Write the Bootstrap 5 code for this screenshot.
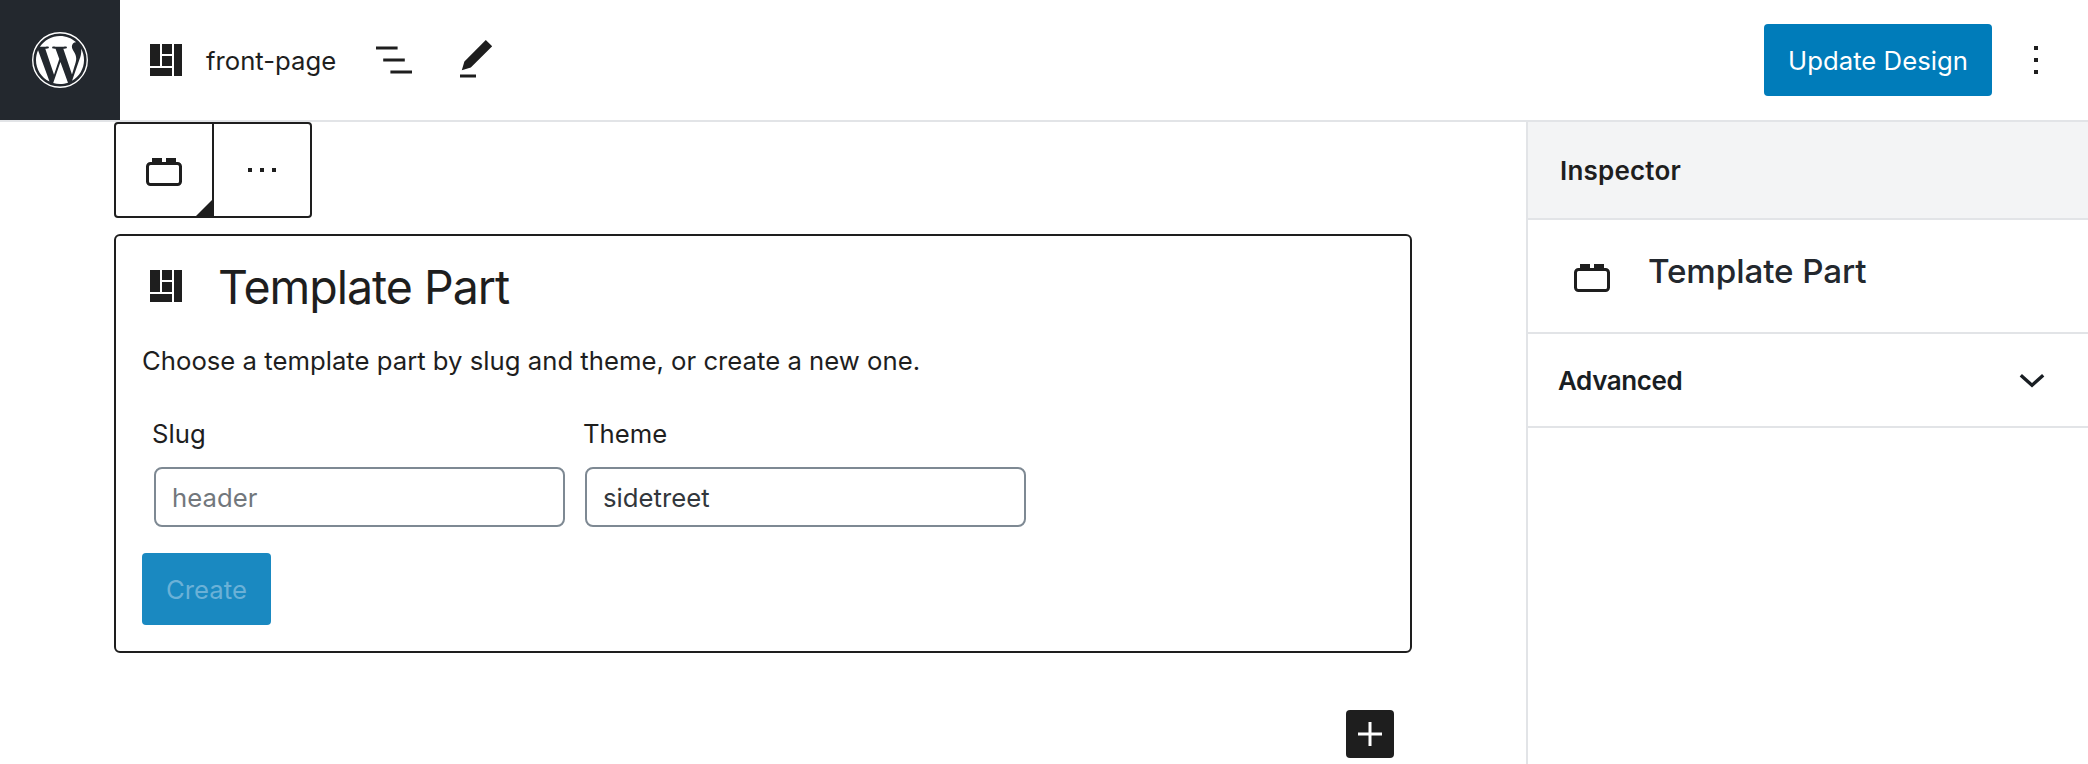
<!DOCTYPE html>
<html lang="en">
<head>
<meta charset="utf-8">
<meta name="viewport" content="width=device-width, initial-scale=1">
<title>front-page</title>
<link href="https://cdn.jsdelivr.net/npm/bootstrap@5.3.0/dist/css/bootstrap.min.css" rel="stylesheet">
<style>
  :root { --ink: #1e1e1e; --line: #e2e4e7; --brand: #007cba; }
  body { font-family: Inter, "Liberation Sans", sans-serif; font-size: 25.7px; line-height: 36px; color: var(--ink); letter-spacing: .01px; height: 764px; background: #fff; }
  svg { display: block; flex: none; fill: currentColor; }
  .btn { --bs-btn-padding-x: 0; --bs-btn-padding-y: 0; --bs-btn-font-size: 25.7px; --bs-btn-border-width: 0; --bs-btn-border-radius: 4px; --bs-btn-color: var(--ink); line-height: 36px; letter-spacing: .03px; }
  .topbar { height: 122px; border-bottom: 2px solid var(--line); }
  .wp-home { width: 120px; height: 120px; background: #23282e; }
  .page-icon { margin-left: 22px; }
  .page-name { margin-left: 16px; width: 164px; padding-top: 1px; }
  .pencil-btn { margin-left: 34px; }
  .btn-brand { height: 72px; padding: 2px 0 0; --bs-btn-bg: var(--brand); --bs-btn-color: #fff; --bs-btn-hover-bg: #006ba1; --bs-btn-hover-color: #fff; --bs-btn-disabled-bg: #1a89c1; --bs-btn-disabled-color: #6bb1d7; --bs-btn-disabled-opacity: 1; }
  .update-btn { width: 228px; }
  .more-btn { margin: 0 28px 0 20px; }
  .create-btn { width: 129px; margin-top: 26px; }
  .canvas { padding: 0 114px; }
  .block-tools { width: 198px; height: 96px; border: 2px solid var(--ink); border-radius: 4px; }
  .block-tools .btn { border-radius: 0; }
  .type-btn { width: 98px; border-right: 2px solid var(--ink); }
  .type-btn .corner { right: 0; bottom: 0; }
  .part-box { margin-top: 16px; border: 2px solid var(--ink); border-radius: 6px; padding: 22px 26px 26px; }
  .part-title { font-size: 46.5px; line-height: 56px; letter-spacing: -1px; margin: 1px 0 -1px 28px; font-weight: 400; }
  .part-hint { margin: 29px 0 37px; }
  .fields { padding-left: 10px; }
  .slug-field { width: 431px; }
  .theme-field { width: 443px; }
  .slug-field .form-control { width: 411px; }
  .fields .form-control { margin: 15px 0 0 2px; height: 60px; border: 2px solid #7e8993; border-radius: 8px; padding: 0 16px; font-size: 25.7px; letter-spacing: .03px; color: #32373c; }
  .theme-field .form-control { width: 441px; }
  .fields .form-control::placeholder { color: #72777c; opacity: 1; }
  .add-btn { width: 48px; height: 48px; background: var(--ink); margin: 57px 18px 0 0; }
  .inspector { width: 562px; border-left: 2px solid var(--line); }
  .inspector-head { height: 98px; padding: 2px 32px 0; background: #f3f4f5; border-bottom: 2px solid var(--line); font-size: 26px; font-weight: 600; letter-spacing: .2px; }
  .inspector-block { height: 114px; border-bottom: 2px solid var(--line); padding: 30px 0 0 40px; }
  .inspector-title { font-size: 33.2px; line-height: 44px; font-weight: 500; color: #23282e; margin: -1px 0 0 32px; letter-spacing: -.1px; }
  .inspector-row { height: 94px; border-bottom: 2px solid var(--line); padding: 0 32px 0 30px; font-size: 26px; font-weight: 600; letter-spacing: -.4px; color: #191e23; }
  .inspector-row span { padding-top: 2px; }
</style>
</head>
<body class="d-flex flex-column overflow-hidden">

<svg width="0" height="0" class="position-absolute" aria-hidden="true">
  <symbol id="layout" viewBox="0 0 24 24">
    <path d="M4 4h5v11H4zM10 4h5v5h-5zM10 10h5v5h-5zM4 16h11v4H4zM16 4h4v16h-4z"/>
  </symbol>
  <symbol id="block" viewBox="0 0 48 48">
    <path d="M12 10h10v5H12zM26 10h10v5H26z"/>
    <rect x="7.5" y="15.5" width="33" height="21" rx="3" fill="none" stroke="currentColor" stroke-width="3"/>
  </symbol>
</svg>

<header class="topbar d-flex align-items-start flex-shrink-0 bg-white">
  <a href="#" class="wp-home d-flex align-items-center justify-content-center text-white" aria-label="Dashboard">
    <svg width="56" height="56" viewBox="0 0 122.52 122.52">
      <path d="m8.708 61.26c0 20.802 12.089 38.779 29.619 47.298l-25.069-68.686c-2.916 6.536-4.55 13.769-4.55 21.388z"/>
      <path d="m96.74 58.608c0-6.495-2.333-10.993-4.334-14.494-2.664-4.329-5.161-7.995-5.161-12.324 0-4.831 3.664-9.328 8.825-9.328.233 0 .454.029.681.042-9.35-8.566-21.807-13.796-35.489-13.796-18.36 0-34.513 9.42-43.91 23.688 1.233.037 2.395.063 3.382.063 5.497 0 14.006-.667 14.006-.667 2.833-.167 3.167 3.994.337 4.329 0 0-2.847.335-6.015.501l19.138 56.925 11.501-34.493-8.188-22.434c-2.83-.166-5.511-.501-5.511-.501-2.832-.166-2.5-4.496.332-4.329 0 0 8.679.667 13.843.667 5.496 0 14.006-.667 14.006-.667 2.835-.167 3.168 3.994.337 4.329 0 0-2.853.335-6.015.501l18.992 56.494 5.242-17.517c2.272-7.269 4.001-12.49 4.001-16.989z"/>
      <path d="m62.184 65.857-15.768 45.819c4.708 1.384 9.687 2.141 14.846 2.141 6.12 0 11.989-1.058 17.452-2.979-.141-.225-.269-.464-.374-.724z"/>
      <path d="m107.376 36.046c.226 1.674.354 3.471.354 5.404 0 5.333-.996 11.328-3.996 18.824l-16.053 46.413c15.624-9.111 26.133-26.038 26.133-45.426.001-9.137-2.333-17.729-6.438-25.215z"/>
      <circle cx="61.26" cy="61.26" r="59.7" fill="none" stroke="currentColor" stroke-width="3"/>
    </svg>
  </a>
  <div class="d-flex align-items-center flex-fill h-100">
    <svg class="page-icon" width="48" height="48"><use href="#layout"/></svg>
    <div class="page-name">front-page</div>
    <button class="btn outline-btn" aria-label="Block navigation">
      <svg width="48" height="48" viewBox="0 0 24 24"><path d="M13.8 5.2H3v1.5h10.8V5.2zm-3.6 12v1.5H21v-1.5H10.2zm7.2-6H6.6v1.5h10.8v-1.5z"/></svg>
    </button>
    <button class="btn pencil-btn" aria-label="Edit">
      <svg width="48" height="48" viewBox="0 0 24 24"><path d="M20.1 5.1L16.9 2 6.2 12.7l-1.3 4.4 4.5-1.3L20.1 5.1zM4 20.8h8v-1.5H4v1.5z"/></svg>
    </button>
    <button class="btn btn-brand update-btn ms-auto">Update Design</button>
    <button class="btn more-btn" aria-label="More">
      <svg width="48" height="48" viewBox="0 0 24 24"><path d="M11 5h2v2h-2zM11 11h2v2h-2zM11 17h2v2h-2z"/></svg>
    </button>
  </div>
</header>

<div class="d-flex flex-fill">
  <main class="canvas flex-fill d-flex flex-column">
    <div class="block-tools d-flex bg-white">
      <button class="btn type-btn position-relative d-flex align-items-center justify-content-center" aria-label="Template Part">
        <svg class="mt-1" width="48" height="48"><use href="#block"/></svg>
        <svg class="corner position-absolute" width="16" height="16" viewBox="0 0 16 16"><path d="M16 0v16H0z"/></svg>
      </button>
      <button class="btn flex-fill d-flex align-items-center justify-content-center" aria-label="More options">
        <svg width="48" height="48" viewBox="0 0 24 24"><path d="M5 11h2v2H5zM11 11h2v2h-2zM17 11h2v2h-2z"/></svg>
      </button>
    </div>

    <section class="part-box">
      <div class="d-flex align-items-center">
        <svg width="48" height="48"><use href="#layout"/></svg>
        <h1 class="part-title">Template Part</h1>
      </div>
      <p class="part-hint">Choose a template part by slug and theme, or create a new one.</p>
      <div class="fields d-flex">
        <div class="slug-field">
          <label class="d-block" for="slug">Slug</label>
          <input id="slug" class="form-control" type="text" placeholder="header">
        </div>
        <div class="theme-field">
          <label class="d-block" for="theme">Theme</label>
          <input id="theme" class="form-control" type="text" value="sidetreet">
        </div>
      </div>
      <button class="btn btn-brand create-btn d-block" disabled>Create</button>
    </section>

    <button class="btn add-btn text-white align-self-end" aria-label="Add block">
      <svg width="48" height="48" viewBox="0 0 48 48" stroke="currentColor" stroke-width="3"><path d="M12 24h24M24 12v24"/></svg>
    </button>
  </main>

  <aside class="inspector flex-shrink-0">
    <div class="inspector-head d-flex align-items-center">Inspector</div>
    <div class="inspector-block d-flex align-items-start">
      <svg class="mt-1" width="48" height="48"><use href="#block"/></svg>
      <h2 class="inspector-title">Template Part</h2>
    </div>
    <div class="inspector-row d-flex align-items-center justify-content-between">
      <span>Advanced</span>
      <svg width="48" height="48" viewBox="0 0 48 48" stroke="currentColor" stroke-width="3.4"><path fill="none" d="M12.8 19.2 24 29.2l11.2-10"/></svg>
    </div>
  </aside>
</div>

<script src="https://cdn.jsdelivr.net/npm/bootstrap@5.3.0/dist/js/bootstrap.bundle.min.js"></script>
</body>
</html>
